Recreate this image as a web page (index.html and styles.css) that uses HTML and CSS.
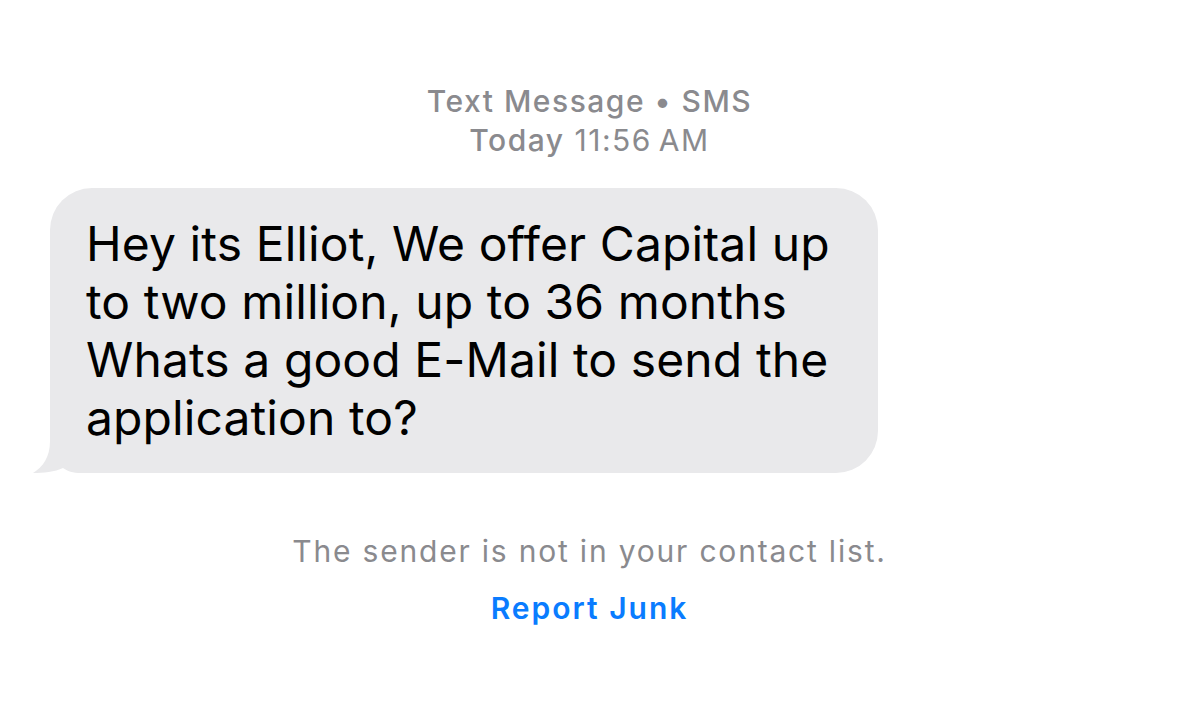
FILE: index.html
```html
<!DOCTYPE html>
<html lang="en">
<head>
  <meta charset="UTF-8" />
  <title>Messages</title>
  <meta name="viewport" content="width=device-width, initial-scale=1.0" />
  <link rel="stylesheet" href="styles.css">
</head>
<body>
  <div class="thread">
    <div class="meta">
      <div class="meta-line strong">Text Message &bull; SMS</div>
      <div class="meta-line"><span class="strong">Today</span> 11:56&thinsp;AM</div>
    </div>

    <div class="bubble">
      <svg class="tail" width="60" height="50" viewBox="0 0 60 50">
        <path d="M17 0 H60 V50 H48 C40 50 34 48 30 45 C22 49 10 50 0 50 C10 44 17 34 17 18 Z" fill="#e9e9eb" />
      </svg>
      <p class="bubble-text">Hey its Elliot, We offer Capital up<br>to two million, up to 36 months<br>Whats a good E-Mail to send the<br>application to?</p>
    </div>

    <div class="notice">
      <p class="notice-text">The sender is not in your contact list.</p>
      <a class="report" href="#">Report Junk</a>
    </div>
  </div>
</body>
</html>
```

FILE: styles.css
```css
body {
  margin: 0;
  background-color: #fff;
  font-family: Inter, "Noto Sans", sans-serif;
}

.thread {
  padding-top: 82px;
}

.meta {
  text-align: center;
  color: #8a8a8e;
  font-size: 30px;
  line-height: 39px;
  letter-spacing: 1.5px;
}

.strong {
  font-weight: 500;
}

.bubble {
  position: relative;
  margin: 28px 0 0 50px;
  width: 828px;
  box-sizing: border-box;
  padding: 27px 30px 26px 36px;
  background-color: #e9e9eb;
  border-radius: 42px;
}

.tail {
  position: absolute;
  left: -17px;
  bottom: 0;
}

.bubble-text {
  position: relative;
  margin: 0;
  color: #000;
  font-size: 48px;
  line-height: 58px;
  letter-spacing: 0.1px;
  white-space: nowrap;
}

.notice {
  text-align: center;
  margin-top: 50px;
  font-size: 30px;
  line-height: 57px;
  letter-spacing: 1.8px;
}

.notice-text {
  margin: 0;
  color: #8a8a8e;
}

.report {
  color: #0a7cff;
  font-weight: 600;
  text-decoration: none;
  letter-spacing: 2px;
}
```
